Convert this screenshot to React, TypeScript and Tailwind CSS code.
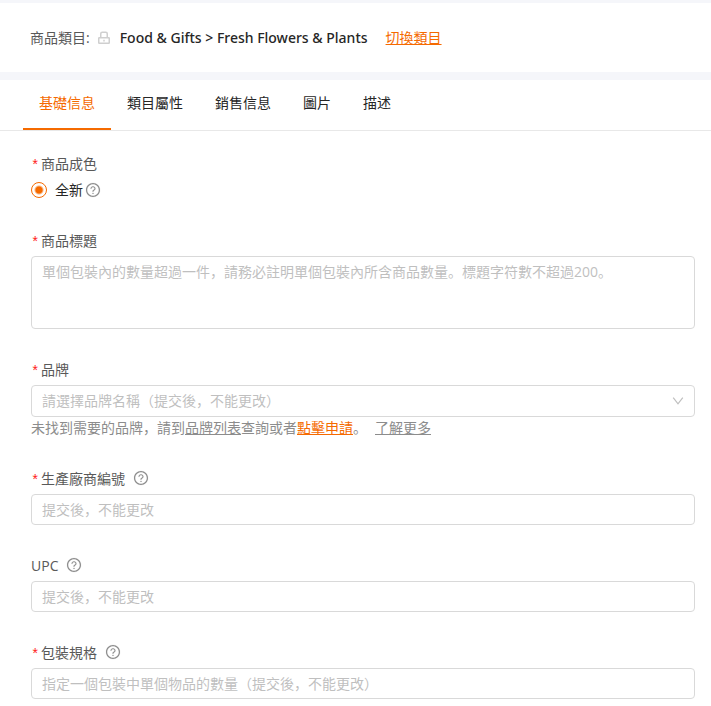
import { useState } from 'react';
import type { ReactNode } from 'react';
import { AiOutlineQuestionCircle } from 'react-icons/ai';

const TABS = ['基礎信息', '類目屬性', '銷售信息', '圖片', '描述'];

function LockIcon() {
  return (
    <svg className="w-3 h-4" viewBox="0 0 12 16" fill="none" stroke="#cfcfcf" strokeWidth="1.5" aria-hidden="true">
      <rect x="0.75" y="7.75" width="10.5" height="5.5" rx="0.5" />
      <path d="M2.75 7.5V3.75a1.5 1.5 0 0 1 1.5-1.5h3.5a1.5 1.5 0 0 1 1.5 1.5V7.5" />
      <path d="M6 9.8v1.6" />
    </svg>
  );
}

function HelpIcon() {
  return <AiOutlineQuestionCircle className="w-4 h-4 text-[#8c8c8c]" stroke="currentColor" strokeWidth="6" aria-hidden="true" />;
}

function RequiredMark() {
  return <span className="w-[10px] pt-[3px] font-['Liberation_Mono',monospace] text-[#ff2020]">*</span>;
}

interface FieldLabelProps {
  htmlFor?: string;
  required?: boolean;
  help?: boolean;
  children: ReactNode;
}

function FieldLabel({ htmlFor, required = false, help = false, children }: FieldLabelProps) {
  return (
    <label htmlFor={htmlFor} className="flex items-center h-[22px] mb-1 text-[#595959]">
      {required && <RequiredMark />}
      {children}
      {help && (
        <span className="ml-2 mb-[2px]">
          <HelpIcon />
        </span>
      )}
    </label>
  );
}

interface TextFieldProps {
  id: string;
  label: string;
  placeholder: string;
  required?: boolean;
}

function TextField({ id, label, placeholder, required = false }: TextFieldProps) {
  return (
    <div>
      <FieldLabel htmlFor={id} required={required} help>
        {label}
      </FieldLabel>
      <input
        id={id}
        type="text"
        placeholder={placeholder}
        className="block w-full h-[31px] px-[10px] bg-white border border-[#d9d9d9] rounded placeholder:text-[#bfbfbf] outline-none focus:border-[#f56a00]"
      />
    </div>
  );
}

export default function App() {
  const [activeTab, setActiveTab] = useState(TABS[0]);

  return (
    <div className="min-h-screen bg-white font-['Open_Sans','Noto_Sans_CJK_SC',sans-serif] text-sm leading-[22px] text-[#262626]">
      <header className="border-t-[3px] border-b-8 border-[#f5f6fa] bg-white px-[30px] flex items-center h-20">
        <span className="text-[#595959]">商品類目:</span>
        <span className="ml-2 mr-[10px]">
          <LockIcon />
        </span>
        <span className="font-['Noto_Sans',sans-serif] font-medium">Food &amp; Gifts &gt; Fresh Flowers &amp; Plants</span>
        <a href="#category" className="ml-[18px] text-[#f56a00] underline">
          切換類目
        </a>
      </header>

      <nav className="flex px-[23px] border-b border-[#e8e8e8]" role="tablist">
        {TABS.map(tab => (
          <button
            key={tab}
            type="button"
            role="tab"
            aria-selected={tab === activeTab}
            onClick={() => setActiveTab(tab)}
            className={`px-4 pt-3 pb-[14px] border-b-2 ${
              tab === activeTab ? 'border-[#f56a00] text-[#f56a00]' : 'border-transparent'
            }`}
          >
            {tab}
          </button>
        ))}
      </nav>

      <form className="pl-[31px] pr-4 pt-[22px] pb-1 flex flex-col gap-[30px]">
        <fieldset>
          <legend className="flex items-center h-[22px] mb-1 text-[#595959]">
            <RequiredMark />
            商品成色
          </legend>
          <div className="flex items-center h-[21px]">
            <label className="flex items-center gap-2">
              <input
                type="radio"
                name="condition"
                defaultChecked
                className="appearance-none w-4 h-4 rounded-full border border-[#f56a00] bg-[radial-gradient(circle,#f56a00_3px,white_5px)]"
              />
              全新
            </label>
            <span className="ml-[2px]">
              <HelpIcon />
            </span>
          </div>
        </fieldset>

        <div>
          <FieldLabel htmlFor="title" required>
            商品標題
          </FieldLabel>
          <textarea
            id="title"
            rows={3}
            placeholder="單個包裝內的數量超過一件，請務必註明單個包裝內所含商品數量。標題字符數不超過200。"
            className="block w-full h-[73px] px-[10px] py-1 bg-white border border-[#d9d9d9] rounded resize-none placeholder:text-[#bfbfbf] outline-none focus:border-[#f56a00]"
          />
        </div>

        <div>
          <FieldLabel htmlFor="brand" required>
            品牌
          </FieldLabel>
          <div className="relative">
            <select
              id="brand"
              className="appearance-none block w-full h-8 px-[10px] bg-white border border-[#d9d9d9] rounded text-[#bfbfbf] outline-none focus:border-[#f56a00]"
            >
              <option>請選擇品牌名稱（提交後，不能更改）</option>
            </select>
            <svg
              className="absolute right-[11px] top-[10px] w-3 h-3 pointer-events-none"
              viewBox="0 0 12 12"
              fill="none"
              stroke="#bfbfbf"
              strokeWidth="1.2"
              aria-hidden="true"
            >
              <path d="M1.2 2.6L6 8.8l4.8-6.2" />
            </svg>
          </div>
          <p className="leading-[21px] text-[#8c8c8c]">
            未找到需要的品牌，請到
            <a href="#brands" className="underline">
              品牌列表
            </a>
            查詢或者
            <a href="#apply" className="text-[#f56a00] underline">
              點擊申請
            </a>
            。
            <a href="#more" className="ml-2 underline">
              了解更多
            </a>
          </p>
        </div>

        <TextField id="mpn" label="生產廠商編號" placeholder="提交後，不能更改" required />
        <TextField id="upc" label="UPC" placeholder="提交後，不能更改" />
        <TextField id="package" label="包裝規格" placeholder="指定一個包裝中單個物品的數量（提交後，不能更改）" required />
      </form>
    </div>
  );
}
